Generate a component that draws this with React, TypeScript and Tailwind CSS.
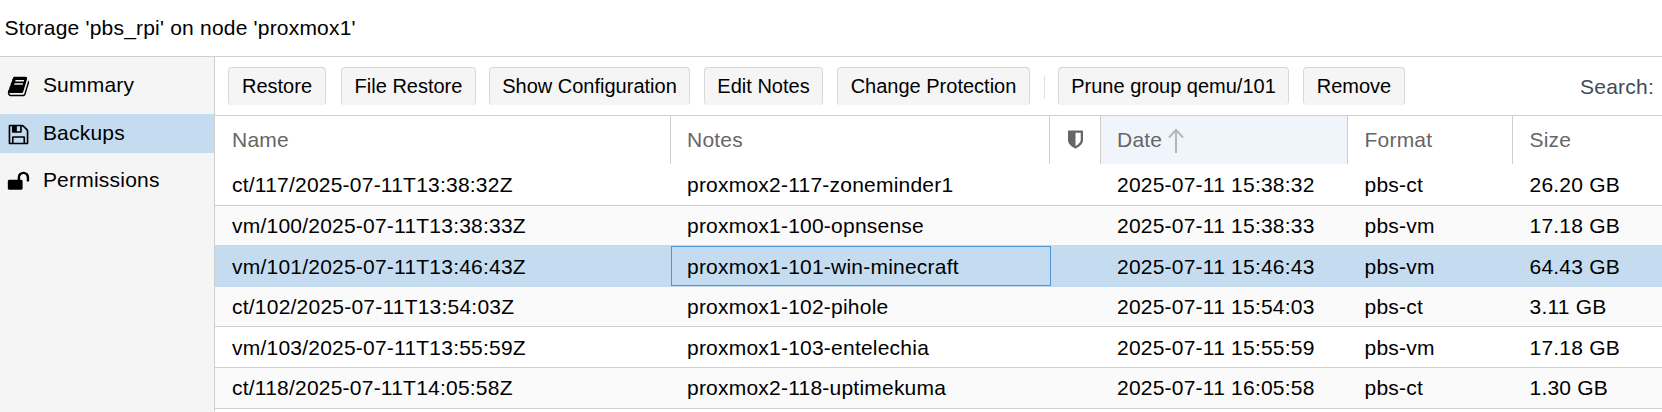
const icons = {
  book: "M1703 478q40 57 18 129l-275 906q-19 64-76.5 107.5t-122.5 43.5h-923q-77 0-148.5-53.5t-99.5-131.5q-24-67-2-127 0-4 3-27t4-37q1-8-3-21.5t-3-19.5q2-11 8-21t16.5-23.5 16.5-23.5q23-38 45-91.5t30-91.5q3-10 .5-30t-.5-28q3-11 17-28t17-23q21-36 42-92t25-90q1-9-2.5-32t.5-28q4-13 22-30.5t22-22.5q19-26 42.5-84.5t27.5-96.5q1-8-3-25.5t-2-26.5q2-8 9-18t18-23 17-21q8-12 16.5-30.5t15-35 16-36 19.5-32 26.5-23.5 36-11.5 47.5 5.5l-1 3q38-9 51-9h761q74 0 114 56t18 130l-274 906q-36 119-71.5 153.5t-128.5 34.5h-869q-27 0-38 15-11 16-1 43 24 70 144 70h923q29 0 56-15.5t35-41.5l300-987q7-22 5-57 38 15 59 43zm-1064 2q-4 13 2 22.5t20 9.5h608q13 0 25.5-9.5t16.5-22.5l21-64q4-13-2-22.5t-20-9.5h-608q-13 0-25.5 9.5t-16.5 22.5zm-83 256q-4 13 2 22.5t20 9.5h608q13 0 25.5-9.5t16.5-22.5l21-64q4-13-2-22.5t-20-9.5h-608q-13 0-25.5 9.5t-16.5 22.5z",
  floppy:
    "M512 1536h768v-384h-768v384zm896 0h128v-896q0-14-10-38.5t-20-34.5l-281-281q-10-10-34-20t-39-10v416q0 40-28 68t-68 28h-576q-40 0-68-28t-28-68v-416h-128v1280h128v-416q0-40 28-68t68-28h832q40 0 68 28t28 68v416zm-384-928v-320q0-13-9.5-22.5t-22.5-9.5h-192q-13 0-22.5 9.5t-9.5 22.5v320q0 13 9.5 22.5t22.5 9.5h192q13 0 22.5-9.5t9.5-22.5zm640 32v928q0 40-28 68t-68 28h-1344q-40 0-68-28t-28-68v-1344q0-40 28-68t68-28h928q40 0 88 20t76 48l280 280q28 28 48 76t20 88z",
  unlock:
    "M1728 576v256q0 26-19 45t-45 19h-64q-26 0-45-19t-19-45v-256q0-106-75-181t-181-75-181 75-75 181v192h96q40 0 68 28t28 68v576q0 40-28 68t-68 28h-960q-40 0-68-28t-28-68v-576q0-40 28-68t68-28h672v-192q0-185 131.5-316.5t316.5-131.5 316.5 131.5 131.5 316.5z",
  shield:
    "M1344 960v-640h-448v1137q119-63 213-137 235-184 235-360zm192-768v768q0 86-33.5 170.5t-83 150-118 127.5-126.5 103-121 77.5-89.5 49.5-42.5 20q-12 6-26 6t-26-6q-16-7-42.5-20t-89.5-49.5-121-77.5-126.5-103-118-127.5-83-150-33.5-170.5v-768q0-26 19-45t45-19h1152q26 0 45 19t19 45z",
};

function Icon({ name, className }: { name: keyof typeof icons; className: string }) {
  return (
    <svg viewBox="0 0 1792 1792" fill="currentColor" className={className}>
      <path d={icons[name]} />
    </svg>
  );
}

const nav: { label: string; icon: keyof typeof icons; row: string }[] = [
  { label: "Summary", icon: "book", row: "h-[57px] pt-4" },
  { label: "Backups", icon: "floppy", row: "h-[39px] bg-[#c5dcf0] pt-[7px]" },
  { label: "Permissions", icon: "unlock", row: "h-[50px] pt-[15px]" },
];

const actions = [
  { label: "Restore", size: "w-[98px] mr-[15px]" },
  { label: "File Restore", size: "w-[135px] mr-[13px]" },
  { label: "Show Configuration", size: "w-[201px] mr-[14px]" },
  { label: "Edit Notes", size: "w-[119px] mr-[14px]" },
  { label: "Change Protection", size: "w-[193px] mr-[14px]" },
];

const groupActions = [
  { label: "Prune group qemu/101", size: "w-[231px] ml-[13px]" },
  { label: "Remove", size: "w-[102px] ml-[14px]" },
];

const columns = "grid grid-cols-[456px_379px_51px_247px_165px_1fr]";

const rows = [
  { id: "ct/117/2025-07-11T13:38:32Z", note: "proxmox2-117-zoneminder1", date: "2025-07-11 15:38:32", format: "pbs-ct", size: "26.20 GB", look: "h-[42px] bg-white border-b", pad: "pt-[9px]" },
  { id: "vm/100/2025-07-11T13:38:33Z", note: "proxmox1-100-opnsense", date: "2025-07-11 15:38:33", format: "pbs-vm", size: "17.18 GB", look: "h-[39px] bg-[#fafafa]", pad: "pt-2" },
  { id: "vm/101/2025-07-11T13:46:43Z", note: "proxmox1-101-win-minecraft", date: "2025-07-11 15:46:43", format: "pbs-vm", size: "64.43 GB", look: "h-[42px] bg-[#c5dcf0]", pad: "pt-[10px]", selected: true },
  { id: "ct/102/2025-07-11T13:54:03Z", note: "proxmox1-102-pihole", date: "2025-07-11 15:54:03", format: "pbs-ct", size: "3.11 GB", look: "h-10 bg-[#fafafa] border-b", pad: "pt-2" },
  { id: "vm/103/2025-07-11T13:55:59Z", note: "proxmox1-103-entelechia", date: "2025-07-11 15:55:59", format: "pbs-vm", size: "17.18 GB", look: "h-[41px] bg-white border-b", pad: "pt-[9px]" },
  { id: "ct/118/2025-07-11T14:05:58Z", note: "proxmox2-118-uptimekuma", date: "2025-07-11 16:05:58", format: "pbs-ct", size: "1.30 GB", look: "h-[41px] bg-[#fafafa] border-b", pad: "pt-2" },
];

function ActionButton({ label, size }: { label: string; size: string }) {
  return (
    <button
      className={`flex h-[38px] shrink-0 justify-center rounded-[4px] border border-b-0 border-[#d8d8d8] bg-[#f5f5f5] pt-[6px] text-xl leading-6 tracking-normal ${size}`}
    >
      {label}
    </button>
  );
}

export default function App() {
  return (
    <div className="flex h-[412px] w-[1662px] flex-col overflow-hidden bg-white font-['Liberation_Sans',Arial,sans-serif] text-[21px] leading-6 tracking-[0.22px] whitespace-nowrap text-black">
      <header className="h-[57px] shrink-0 border-b border-[#cfcfcf] pt-4 pl-[4.5px] tracking-[0.2px]">
        Storage 'pbs_rpi' on node 'proxmox1'
      </header>
      <div className="flex min-h-0 flex-1">
        <nav className="w-[215px] shrink-0 border-r border-[#cfcfcf] bg-[#f5f5f5]">
          {nav.map((n) => (
            <div key={n.label} className={`flex items-start pl-[6.5px] ${n.row}`}>
              <Icon name={n.icon} className="mt-[1.5px] size-[23px] shrink-0" />
              <span className="ml-[13.4px]">{n.label}</span>
            </div>
          ))}
        </nav>
        <main className="flex min-w-0 flex-1 flex-col">
          <div className="flex h-[59px] shrink-0 items-start border-b border-[#cfcfcf] pt-[10px] pl-[13px]">
            {actions.map((a) => (
              <ActionButton key={a.label} {...a} />
            ))}
            <div className="mt-[9px] h-[23px] w-px bg-[#e0e0e0]" />
            {groupActions.map((a) => (
              <ActionButton key={a.label} {...a} />
            ))}
            <span className="mt-2 mr-[8px] ml-auto text-[#3f4b57]">Search:</span>
          </div>
          <div className={`${columns} h-12 shrink-0 text-[#666666] *:border-r *:border-[#cfcfcf] *:pt-3`}>
            <div className="pl-[17px]">Name</div>
            <div className="pl-4">Notes</div>
            <div className="flex justify-center">
              <Icon name="shield" className="mt-[1px] size-[21px]" />
            </div>
            <div className="flex bg-[#f0f5fc] pl-4">
              Date
              <svg viewBox="0 0 16 26" className="ml-[6px] h-[26px] w-4" fill="none" stroke="#b4b6b9" strokeWidth="2">
                <path d="M8 25V2M1 9.5L8 2l7 7.5" />
              </svg>
            </div>
            <div className="pl-[16.5px]">Format</div>
            <div className="border-r-0! pl-[16.5px]">Size</div>
          </div>
          {rows.map((r) => (
            <div key={r.id} className={`${columns} shrink-0 border-[#cfcfcf] ${r.look}`}>
              <div className={`pl-[17px] ${r.pad}`}>{r.id}</div>
              {r.selected ? (
                <div className="mt-px mr-[-1px] h-10 border border-[#5295d3] pt-2 pl-[15px]">{r.note}</div>
              ) : (
                <div className={`pl-4 ${r.pad}`}>{r.note}</div>
              )}
              <div />
              <div className={`pl-4 ${r.pad}`}>{r.date}</div>
              <div className={`pl-[16.5px] ${r.pad}`}>{r.format}</div>
              <div className={`pl-[16.5px] ${r.pad}`}>{r.size}</div>
            </div>
          ))}
        </main>
      </div>
    </div>
  );
}
